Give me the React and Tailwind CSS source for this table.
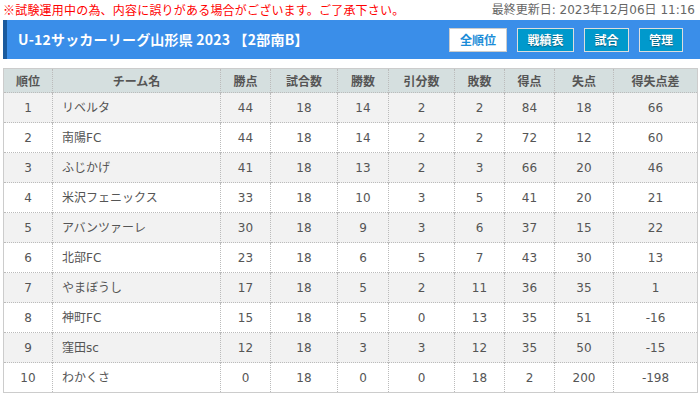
import React from "react";

const rows = [
  [1, "リベルタ", 44, 18, 14, 2, 2, 84, 18, 66],
  [2, "南陽FC", 44, 18, 14, 2, 2, 72, 12, 60],
  [3, "ふじかげ", 41, 18, 13, 2, 3, 66, 20, 46],
  [4, "米沢フェニックス", 33, 18, 10, 3, 5, 41, 20, 21],
  [5, "アバンツァーレ", 30, 18, 9, 3, 6, 37, 15, 22],
  [6, "北部FC", 23, 18, 6, 5, 7, 43, 30, 13],
  [7, "やまぼうし", 17, 18, 5, 2, 11, 36, 35, 1],
  [8, "神町FC", 15, 18, 5, 0, 13, 35, 51, -16],
  [9, "窪田sc", 12, 18, 3, 3, 12, 35, 50, -15],
  [10, "わかくさ", 0, 18, 0, 0, 18, 2, 200, -198],
];

const heads = ["順位", "チーム名", "勝点", "試合数", "勝数", "引分数", "敗数", "得点", "失点", "得失点差"];
const widths = ["w-[49px]", "w-[168px]", "w-[50px]", "w-[67px]", "w-[51px]", "w-[66px]", "w-[50px]", "w-[50px]", "w-[59px]", "w-[84px]"];

const App = () => {
  return (
    <div className="w-[700px] h-[396px] bg-white overflow-hidden font-['Noto_Sans_CJK_JP',sans-serif]">
      <div className="h-[20px] px-[3px] flex items-center justify-between text-[12px] leading-none">
        <span className="text-[#ff0000] tracking-[0.2px]">※試験運用中の為、内容に誤りがある場合がございます。ご了承下さい。</span>
        <span className="text-[#666] pr-[2px] font-['DejaVu_Sans','Noto_Sans_CJK_JP',sans-serif]">最終更新日: 2023年12月06日 11:16</span>
      </div>

      <div className="ml-[3px] h-[39px] bg-[#3a8ee9] border-l-[4px] border-[#1a5a9e] flex items-center justify-between pl-[11px] pr-[17px]">
        <h1 className="text-white font-bold text-[14px] tracking-[0.2px]">U-12サッカーリーグ山形県 2023 【2部南B】</h1>
        <div className="flex gap-[10px]">
          <button className="w-[58px] h-[24px] bg-white border border-[#ccc] text-[#1a8cd8] font-bold text-[12px]">全順位</button>
          <button className="w-[57px] h-[24px] bg-[#0099cc] border border-[#ddd] text-white font-bold text-[12px] [text-shadow:0_1px_1px_rgba(0,0,0,0.4)]">戦績表</button>
          <button className="w-[45px] h-[24px] bg-[#0099cc] border border-[#ddd] text-white font-bold text-[12px] [text-shadow:0_1px_1px_rgba(0,0,0,0.4)]">試合</button>
          <button className="w-[44px] h-[24px] bg-[#0099cc] border border-[#ddd] text-white font-bold text-[12px] [text-shadow:0_1px_1px_rgba(0,0,0,0.4)]">管理</button>
        </div>
      </div>

      <table className="mt-[9px] ml-[3px] w-[694px] border-collapse border border-[#ccc] text-[12px] text-[#555] table-fixed">
        <thead>
          <tr className="h-[24px] bg-[#d5dfdf]">
            {heads.map((h, i) => (
              <th key={h} className={`${widths[i]} font-bold text-center border-r border-dotted border-[#bbb] last:border-r-0 p-0`}>
                {h}
              </th>
            ))}
          </tr>
        </thead>
        <tbody className="font-['DejaVu_Sans','Noto_Sans_CJK_JP',sans-serif]">
          {rows.map((r, ri) => (
            <tr key={r[0]} className={`h-[30px] ${ri % 2 === 0 ? "bg-[#f2f2f2]" : "bg-white"}`}>
              {r.map((c, ci) => (
                <td
                  key={ci}
                  className={`p-0 border-t border-r border-dotted border-[#bbb] last:border-r-0 ${ci === 1 ? "text-left pl-[9px]" : "text-center"}`}
                >
                  {c}
                </td>
              ))}
            </tr>
          ))}
        </tbody>
      </table>
    </div>
  );
};

export default App;
